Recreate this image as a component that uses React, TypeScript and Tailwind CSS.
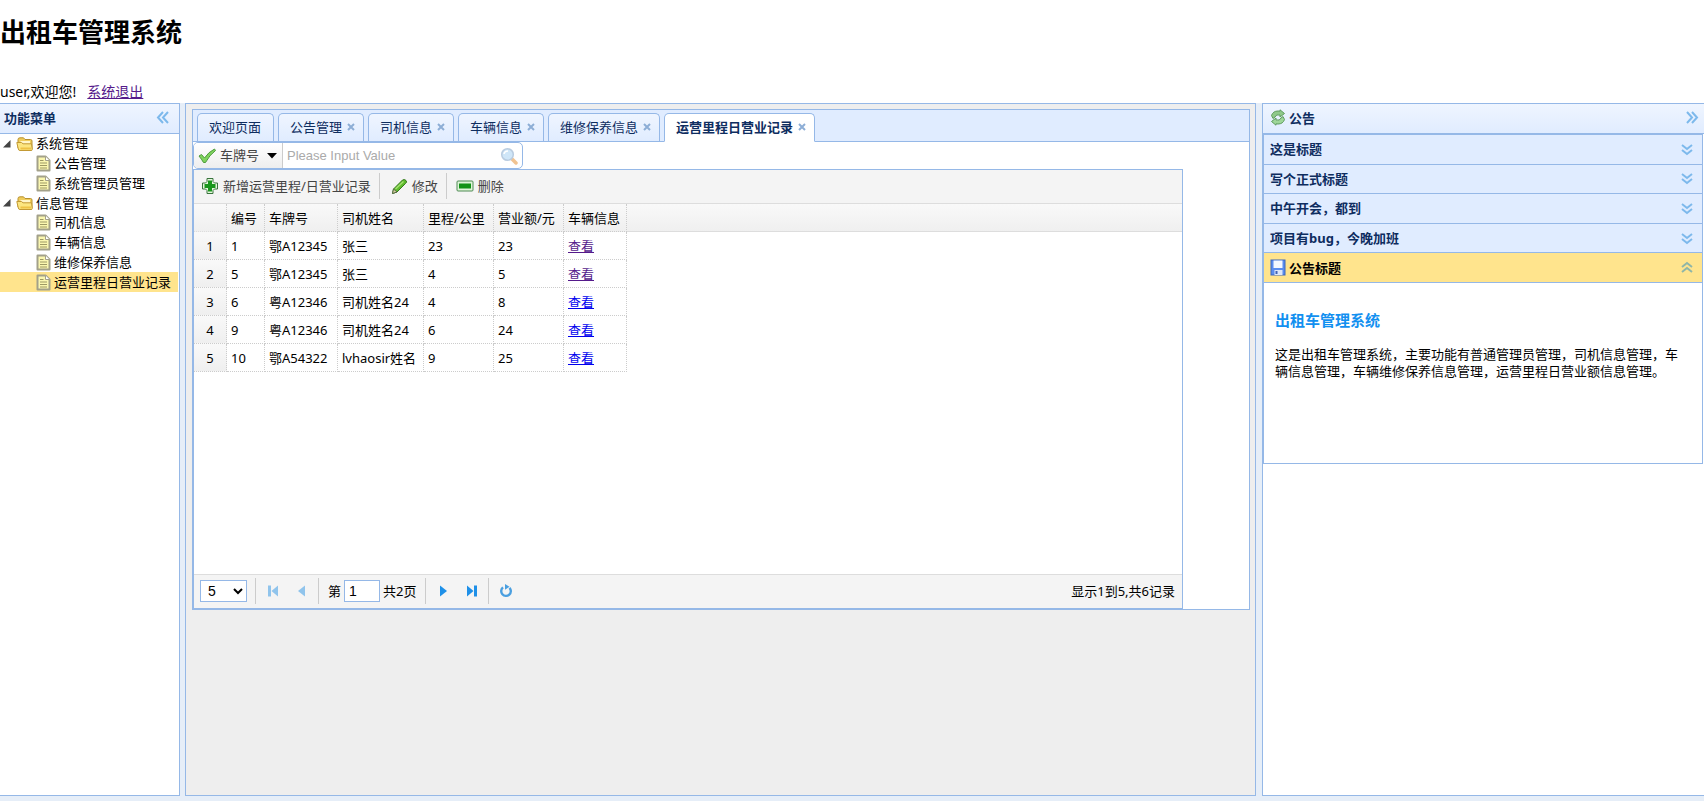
import { useState } from "react";
import type { ReactNode } from "react";

type TreeNode = { label: string; folder?: boolean; active?: boolean };

const treeNodes: TreeNode[] = [
  { label: "系统管理", folder: true },
  { label: "公告管理" },
  { label: "系统管理员管理" },
  { label: "信息管理", folder: true },
  { label: "司机信息" },
  { label: "车辆信息" },
  { label: "维修保养信息" },
  { label: "运营里程日营业记录", active: true },
];

const tabs = ["欢迎页面", "公告管理", "司机信息", "车辆信息", "维修保养信息", "运营里程日营业记录"];

const columns = ["编号", "车牌号", "司机姓名", "里程/公里", "营业额/元", "车辆信息"];

const records = [
  { id: 1, plate: "鄂A12345", driver: "张三", mileage: 23, turnover: 23, visited: true },
  { id: 5, plate: "鄂A12345", driver: "张三", mileage: 4, turnover: 5, visited: true },
  { id: 6, plate: "粤A12346", driver: "司机姓名24", mileage: 4, turnover: 8, visited: false },
  { id: 9, plate: "粤A12346", driver: "司机姓名24", mileage: 6, turnover: 24, visited: false },
  { id: 10, plate: "鄂A54322", driver: "lvhaosir姓名", mileage: 9, turnover: 25, visited: false },
];

const notices = ["这是标题", "写个正式标题", "中午开会，都到", "项目有bug，今晚加班", "公告标题"];

function DoubleChevron({ direction }: { direction: "left" | "right" | "up" | "down" }) {
  const paths = {
    left: "M8 3 3 8.500 8 14M13 3 8 8.500 13 14",
    right: "M3 3 8 8.500 3 14M8 3 13 8.500 8 14",
    up: "M3 8 8 4 13 8M3 13 8 9 13 13",
    down: "M3 4 8 8 13 4M3 9 8 13 13 9",
  };
  return (
    <svg width="16" height="17" viewBox="0 0 16 17" fill="none" stroke={direction === "up" ? "#8fb6a8" : "#7db9ec"} strokeWidth="2">
      <path d={paths[direction]} />
    </svg>
  );
}

function FolderIcon() {
  return (
    <svg width="18" height="16" viewBox="0 0 18 16">
      <path d="M2 12V3.500Q2 1.800 4 1.800H7.500L9 3.500H14.500Q16 3.500 16 5V13Z" fill="#f0cd5c" stroke="#b8912f" />
      <path d="M4.500 5H14V8H4.500Z" fill="#fff6c9" />
      <path d="M.8 6.500H5.500L7 7.800H15.500L16.300 13.500Q16.300 14.500 15 14.500H4Q2.600 14.500 2.300 13Z" fill="#fce680" stroke="#c39a35" />
      <path d="M4.500 12.500H15" stroke="#eec245" strokeWidth="2" />
    </svg>
  );
}

function FileIcon() {
  return (
    <svg width="15" height="17" viewBox="0 0 15 17">
      <path d="M1.500 1.500H9.500L13.500 5.500V15.500H1.500Z" fill="#fbf7b0" stroke="#a3a18a" strokeWidth="2" strokeLinejoin="round" />
      <path d="M9.500 1.500V5.500H13.500" fill="#fff" stroke="#a3a18a" />
      <path d="M4 5.500H7.500M4 8H11M4 10.500H11M4 13H11" stroke="#9d9964" strokeWidth="1.200" />
    </svg>
  );
}

function CheckIcon() {
  return (
    <svg width="18" height="16" viewBox="0 0 18 16">
      <path d="M1 8 3.500 6.500 6.500 10Q10.500 4 16.500 1L17.500 2.500Q11.500 7 7.500 14.500H5.500Q3.500 11 1 8Z" fill="#7fd35c" stroke="#4d9a3c" strokeLinejoin="round" />
    </svg>
  );
}

function SearchIcon() {
  return (
    <svg width="18" height="18" viewBox="0 0 18 18">
      <path d="m11 11 5 5" stroke="#f1c391" strokeWidth="3.500" strokeLinecap="round" />
      <circle cx="7.500" cy="7.500" r="5.800" fill="#cfe6f8" stroke="#b9cce0" strokeWidth="1.500" />
      <path d="M4 7Q4.500 4 8 4" stroke="#fff" strokeWidth="1.500" fill="none" />
    </svg>
  );
}

function AddIcon() {
  return (
    <svg width="18" height="18" viewBox="0 0 18 18">
      <path d="M6 1.500H12V4.500L13.500 6H16.500V12H13.500L12 13.500V16.500H6V13.500L4.500 12H1.500V6H4.500L6 4.500Z" fill="#e4f7dc" stroke="#39733d" strokeLinejoin="round" />
      <path d="M9 3.500V14.500M3.500 9H14.500" stroke="#19961d" strokeWidth="4" />
    </svg>
  );
}

function PencilIcon() {
  return (
    <svg width="17" height="17" viewBox="0 0 17 17">
      <path d="M1.500 15.500 2.500 11 11.500 2Q13.500 .8 15 2.500T14.500 5.500L6 14Z" fill="#5dbb2b" stroke="#37791f" strokeLinejoin="round" />
      <path d="M4.500 11 12.500 3.500" stroke="#a5e070" strokeWidth="1.500" />
      <path d="M1.500 15.500 2.500 11 6 14Z" fill="#d7d0a4" stroke="#5a6b45" strokeLinejoin="round" />
    </svg>
  );
}

function RemoveIcon() {
  return (
    <svg width="18" height="12" viewBox="0 0 18 12">
      <rect x="1" y="1" width="16" height="10" rx="1" fill="#dff5d8" stroke="#4e8a55" />
      <rect x="3" y="3.500" width="12" height="5" fill="#119316" />
    </svg>
  );
}

function ReloadIcon() {
  return (
    <svg width="16" height="17" viewBox="0 0 16 17">
      <path d="M1.500 6.500Q3 2 8 2L10 2.200V.8L14.500 4.500 10 8V6Q6 5 5 8L3 9.500Z" fill="#8fc98a" stroke="#5f9c5f" strokeLinejoin="round" />
      <path d="M14.500 10.500Q13 15 8 15L6 14.800V16.200L1.500 12.500 6 9V11Q10 12 11 9L13 7.500Z" fill="#9ed699" stroke="#5f9c5f" strokeLinejoin="round" />
    </svg>
  );
}

function SaveIcon() {
  return (
    <svg width="16" height="17" viewBox="0 0 16 17">
      <rect x="1" y="1" width="14" height="15" fill="#5b8def" stroke="#3c66bd" />
      <rect x="3.500" y="1.500" width="9" height="7.500" fill="#f4f8ff" />
      <rect x="4.500" y="11" width="8" height="5" fill="#dbe6fa" />
      <rect x="5.500" y="12" width="2" height="3" fill="#3f62b5" />
    </svg>
  );
}

function PageButton({ label, disabled, children }: { label: string; disabled?: boolean; children: ReactNode }) {
  return (
    <button
      type="button"
      aria-label={label}
      disabled={disabled}
      className="flex h-[26px] w-[29px] items-center justify-center text-[#1e90e8] disabled:text-[#90c4ec]"
    >
      <svg width="14" height="14" viewBox="0 0 14 14" fill="currentColor">
        {children}
      </svg>
    </button>
  );
}

function Separator() {
  return <span className="h-[26px] w-px bg-[#ccc]" />;
}

function WestPanel() {
  return (
    <nav className="flex w-[180px] shrink-0 flex-col border-y border-r border-[#95B8E7] bg-white">
      <div className="flex h-[30px] items-center justify-between border-b border-[#95B8E7] bg-linear-to-b from-[#EFF5FF] to-[#E0ECFF] pr-2 pb-[2px] pl-1">
        <h2 className="font-bold text-[#0E2D5F]">功能菜单</h2>
        <button type="button" aria-label="collapse menu">
          <DoubleChevron direction="left" />
        </button>
      </div>
      {/* tree */}
      <ul className="grid h-[158px] auto-rows-fr pr-px">
        {treeNodes.map((node) => (
          <li key={node.label} className={node.active ? "bg-[#FFE48D]" : ""}>
            <a href="#" className={`flex h-full items-center ${node.folder ? "gap-[2px] pl-[3px]" : "gap-[3px] pl-9"}`}>
              {node.folder ? (
                <>
                  <svg width="11" height="8" viewBox="0 0 11 8">
                    <path d="M7.500 0V7.500H0Z" fill="#444" />
                  </svg>
                  <FolderIcon />
                </>
              ) : (
                <FileIcon />
              )}
              <span className="pb-px whitespace-nowrap">{node.label}</span>
            </a>
          </li>
        ))}
      </ul>
    </nav>
  );
}

function TabStrip() {
  return (
    <div className="flex h-8 items-end gap-1 border-b border-[#95B8E7] bg-[#E0ECFF] pl-1">
      {tabs.map((tab, index) => {
        const selected = index === tabs.length - 1;
        return (
          <div
            key={tab}
            className={`flex items-center rounded-t-[5px] border border-[#95B8E7] pb-px text-[#0E2D5F] ${
              selected ? "-mb-px h-[29px] border-b-white bg-white font-bold" : "h-7 border-b-0 bg-linear-to-b from-[#EFF5FF] to-[#E0ECFF]"
            } ${index === 0 ? "pr-3 pl-[11px]" : "pr-[3px] pl-[11px]"}`}
          >
            <button type="button">{tab}</button>
            {index > 0 ? (
              <button type="button" aria-label={`close ${tab}`} className="flex w-[18px] justify-center">
                <svg width="8" height="8" viewBox="0 0 8 8" stroke="#8daed6" strokeWidth="2">
                  <path d="m1 1 6 6M7 1 1 7" />
                </svg>
              </button>
            ) : null}
          </div>
        );
      })}
    </div>
  );
}

function SearchBox() {
  const [value, setValue] = useState("");

  return (
    <form className="flex h-[27px] w-[330px] overflow-hidden rounded-[5px] border border-[#95B8E7] bg-white">
      <button type="button" className="flex w-[89px] items-center gap-1 border-r border-[#ccc] bg-linear-to-b from-white to-[#eee] pl-1 text-[#444]">
        <CheckIcon />
        <span className="pb-px">车牌号</span>
        <svg width="10" height="6" viewBox="0 0 10 6" className="ml-1">
          <path d="M0 0H10L5 5.500Z" fill="#000" />
        </svg>
      </button>
      <input
        aria-label="车牌号"
        value={value}
        onChange={(event) => setValue(event.target.value)}
        placeholder="Please Input Value"
        className="min-w-0 flex-1 px-1 font-['Liberation_Sans',sans-serif] outline-none placeholder:text-[#aaa]"
      />
      <button type="submit" aria-label="search" className="flex w-[22px] items-center">
        <SearchIcon />
      </button>
    </form>
  );
}

function RecordTable() {
  return (
    <table className="w-full table-fixed border-separate border-spacing-0 text-left">
      <colgroup>
        <col className="w-[33px]" />
        <col className="w-[38px]" />
        <col className="w-[73px]" />
        <col className="w-[86px]" />
        <col className="w-[70px]" />
        <col className="w-[70px]" />
        <col className="w-[63px]" />
        <col />
      </colgroup>
      <thead>
        <tr className="h-7 bg-linear-to-b from-[#F9F9F9] to-[#EFEFEF]">
          <th className="border-r border-b border-dotted border-[#ccc] border-b-[#ddd]" />
          {columns.map((column) => (
            <th key={column} className="border-r border-b border-dotted border-[#ccc] p-0 pl-1 font-normal whitespace-nowrap">
              {column}
            </th>
          ))}
          <th className="border-b border-[#ddd]" />
        </tr>
      </thead>
      <tbody>
        {records.map((record, index) => (
          <tr
            key={record.id}
            className="h-7 [&>td]:border-r [&>td]:border-b [&>td]:border-dotted [&>td]:border-[#ccc] [&>td]:p-0 [&>td]:pl-1 [&>td]:whitespace-nowrap"
          >
            <th className="border-r border-b border-dotted border-[#ccc] bg-linear-to-b from-[#F9F9F9] to-[#EFEFEF] p-0 text-center font-normal">
              {index + 1}
            </th>
            <td>{record.id}</td>
            <td>{record.plate}</td>
            <td>{record.driver}</td>
            <td>{record.mileage}</td>
            <td>{record.turnover}</td>
            <td>
              <a href="#" className={`underline ${record.visited ? "text-[#551A8B]" : "text-[#0000EE]"}`}>
                查看
              </a>
            </td>
          </tr>
        ))}
      </tbody>
    </table>
  );
}

function Pager() {
  return (
    <div className="flex h-[34px] items-center border-t border-[#ddd] bg-[#F4F4F4] pr-[7px] pb-px pl-[6px]">
      <select
        aria-label="page size"
        defaultValue="5"
        className="mr-2 h-[22px] w-[47px] border border-[#95B8E7] bg-white pl-[3px] font-['Liberation_Sans',sans-serif] text-[14px]"
      >
        <option>5</option>
        <option>10</option>
      </select>
      <Separator />
      <div className="flex px-[2px]">
        <PageButton label="first page" disabled>
          <path d="M2 1.500H5V12.500H2ZM12 1.500V12.500L5.500 7Z" />
        </PageButton>
        <PageButton label="previous page" disabled>
          <path d="M10 1.500V12.500L3 7Z" />
        </PageButton>
      </div>
      <Separator />
      <label className="flex items-center gap-[3px] px-[9px]">
        第
        <input
          defaultValue="1"
          className="h-[22px] w-9 border border-[#95B8E7] bg-white px-1 font-['Liberation_Sans',sans-serif] text-[14px]"
        />
        <span>共2页</span>
      </label>
      <Separator />
      <div className="flex px-[2px]">
        <PageButton label="next page">
          <path d="M4 1.500V12.500L11 7Z" />
        </PageButton>
        <PageButton label="last page">
          <path d="M2 1.500V12.500L8.500 7ZM9 1.500H12V12.500H9Z" />
        </PageButton>
      </div>
      <Separator />
      <div className="flex px-[2px]">
        <PageButton label="refresh">
          <path d="M4 3.400A4.800 4.800 0 1 0 10.500 3.800" fill="none" stroke="#4a9fe0" strokeWidth="2.400" />
          <path d="M6 0 10.500 2.700 6 5.800Z" fill="#4a9fe0" />
        </PageButton>
      </div>
      <p className="ml-auto">显示1到5,共6记录</p>
    </div>
  );
}

function CenterPanel() {
  return (
    <main className="min-w-0 flex-1 border border-[#95B8E7] bg-[#EEE] pt-[5px] pr-[5px] pl-[6px]">
      <section className="border border-[#95B8E7] bg-white">
        <TabStrip />
        <SearchBox />
        <div className="mr-[66px] border border-[#95B8E7]">
          <div className="flex h-[34px] items-center border-b border-[#ddd] bg-[#F4F4F4] pb-px pl-[7px] text-[#444]">
            <button type="button" className="mr-2 flex items-center gap-1">
              <AddIcon />
              新增运营里程/日营业记录
            </button>
            <Separator />
            <button type="button" className="mx-2 flex items-center gap-1 pl-[3px]">
              <PencilIcon />
              修改
            </button>
            <Separator />
            <button type="button" className="flex items-center gap-1 pl-[9px]">
              <RemoveIcon />
              删除
            </button>
          </div>
          <div className="h-[370px]">
            <RecordTable />
          </div>
          <Pager />
        </div>
      </section>
    </main>
  );
}

function EastPanel() {
  return (
    <aside className="w-[442px] shrink-0 border-y border-l border-[#95B8E7] bg-white">
      <div className="flex h-[30px] items-center gap-[3px] border-b border-[#95B8E7] bg-linear-to-b from-[#EFF5FF] to-[#E0ECFF] pr-1 pb-[2px] pl-[7px]">
        <ReloadIcon />
        <h2 className="font-bold text-[#0E2D5F]">公告</h2>
        <button type="button" aria-label="collapse notices" className="ml-auto">
          <DoubleChevron direction="right" />
        </button>
      </div>
      {/* accordion */}
      <div className="mr-px border border-[#95B8E7]">
        <div className="grid h-[148px] auto-rows-fr">
          {notices.map((notice, index) => {
            const open = index === notices.length - 1;
            return (
              <button
                key={notice}
                type="button"
                aria-expanded={open}
                className={`flex items-center gap-[3px] border-b border-[#95B8E7] pr-[7px] pl-[6px] text-left font-bold ${
                  open ? "bg-[#FFE48D] text-black" : "bg-[#E0ECFF] text-[#0E2D5F]"
                }`}
              >
                {open ? <SaveIcon /> : null}
                <span className="flex-1">{notice}</span>
                <DoubleChevron direction={open ? "up" : "down"} />
              </button>
            );
          })}
        </div>
        <article className="h-[180px] py-[27px] pr-[18px] pl-[11px]">
          <h3 className="text-[15px] leading-5 font-bold text-[#1290F0]">出租车管理系统</h3>
          <p className="mt-4 leading-[17px]">
            这是出租车管理系统，主要功能有普通管理员管理，司机信息管理，车辆信息管理，车辆维修保养信息管理，运营里程日营业额信息管理。
          </p>
        </article>
      </div>
    </aside>
  );
}

export default function App() {
  return (
    <div className="flex min-h-screen flex-col bg-[#E6EEF8] font-['Noto_Sans','Noto_Sans_CJK_SC',sans-serif] text-[13px] leading-[18px] text-black">
      <header className="flex h-[103px] flex-col justify-between bg-white pt-[14px]">
        <h1 className="text-[26px] leading-9 font-bold">出租车管理系统</h1>
        <p className="text-[14px] leading-[22px]">
          user,欢迎您!
          <a href="#" className="ml-[11px] text-[#551A8B] underline">
            系统退出
          </a>
        </p>
      </header>
      <div className="flex flex-1 pb-[5px]">
        <WestPanel />
        <div className="w-[5px] shrink-0" />
        <CenterPanel />
        <div className="w-[6px] shrink-0" />
        <EastPanel />
      </div>
    </div>
  );
}
